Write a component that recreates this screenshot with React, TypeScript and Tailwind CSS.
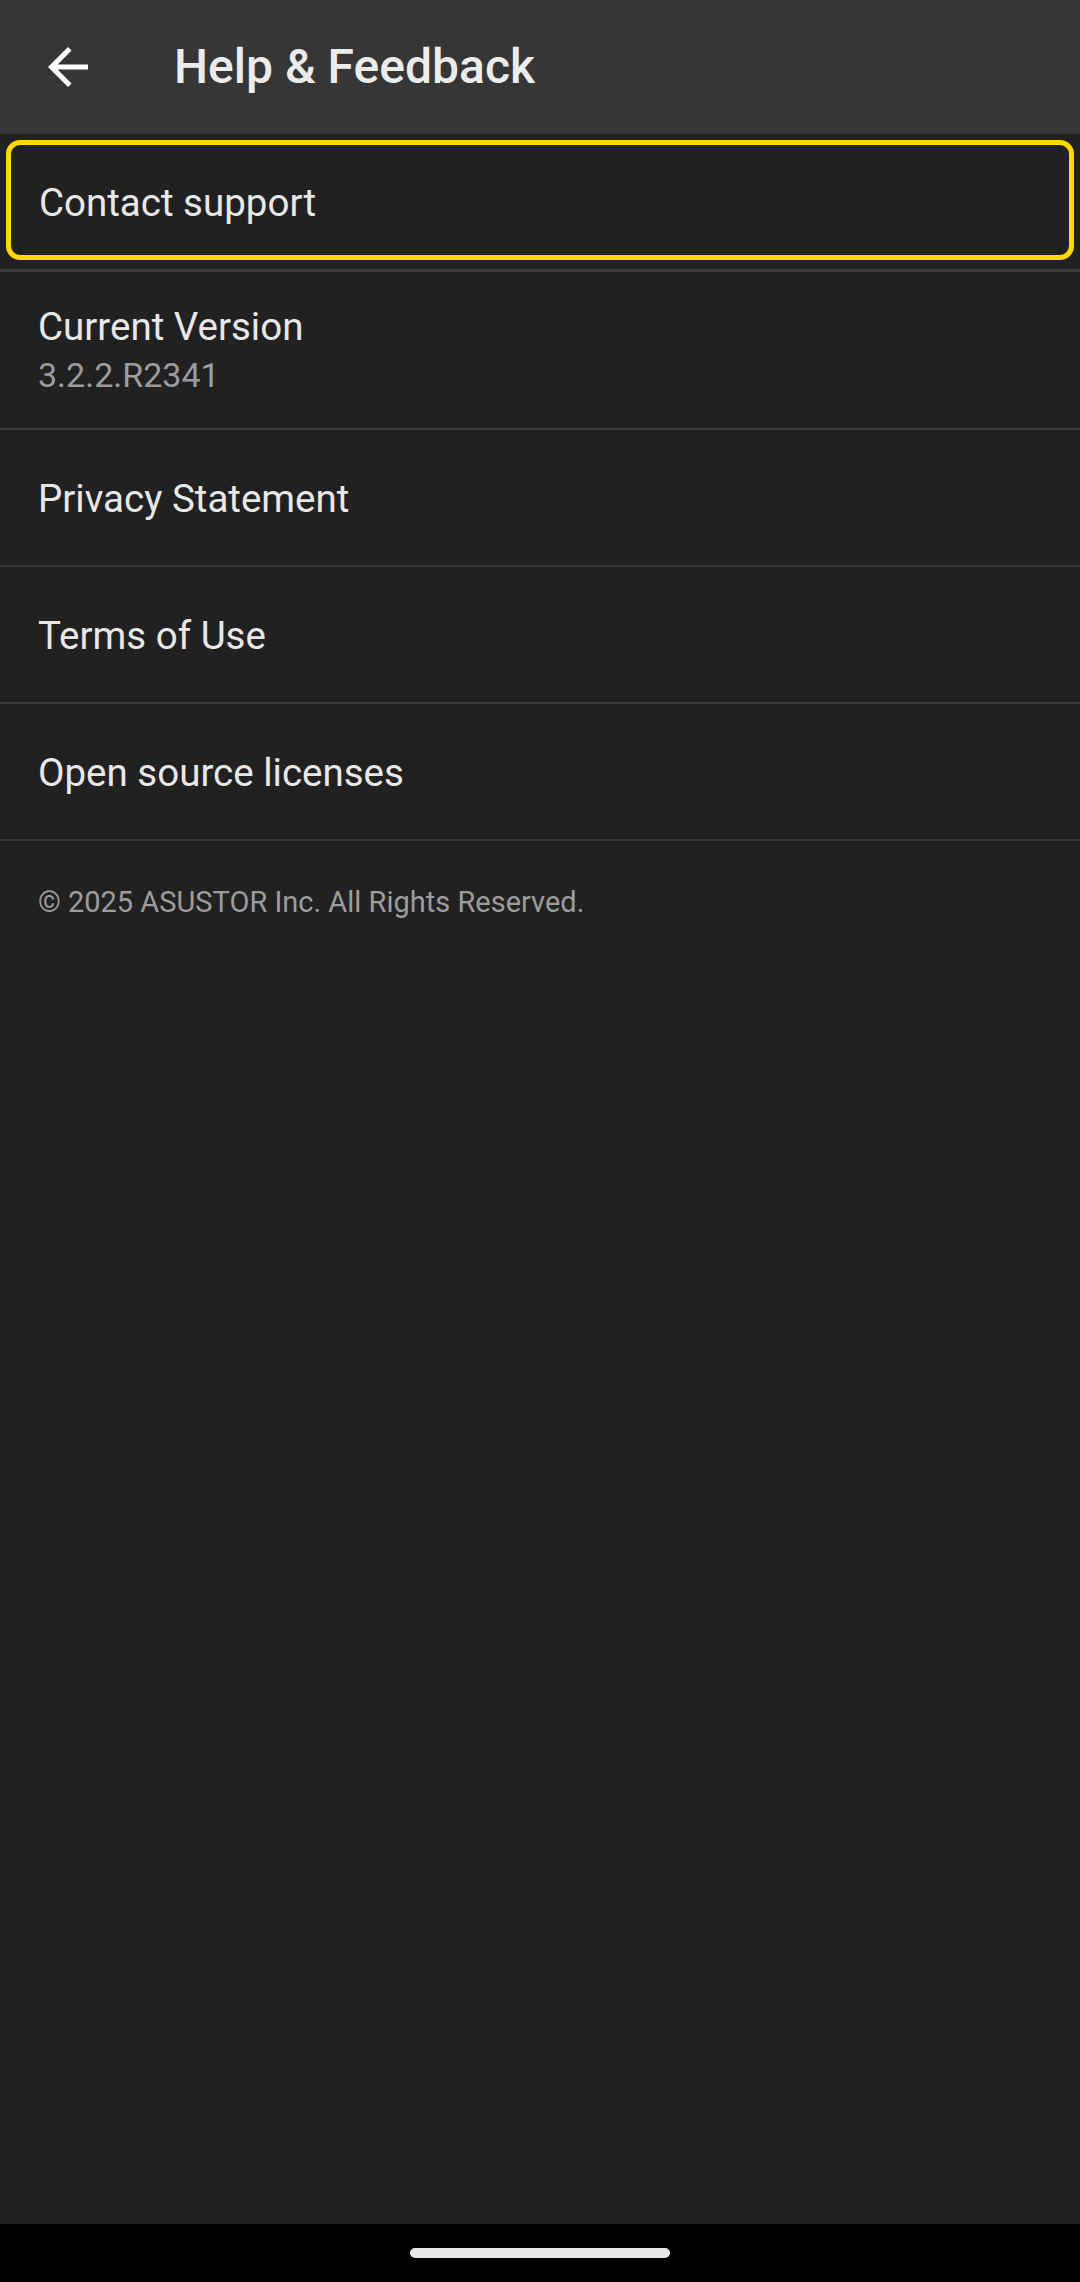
export default function App() {
  const rows = ["Privacy Statement", "Terms of Use", "Open source licenses"];

  return (
    <div className="flex min-h-screen w-full flex-col bg-[#212121] font-['Roboto',sans-serif] text-[#e8e8e8]">
      {/* toolbar */}
      <header className="flex h-[134px] shrink-0 items-center bg-[#363636]">
        <button className="ml-[38px] flex h-[60px] w-[60px] items-center justify-center text-white">
          <svg viewBox="0 0 24 24" className="h-[60px] w-[60px]" fill="currentColor">
            <path d="M20 11H7.83l5.59-5.59L12 4l-8 8 8 8 1.41-1.41L7.83 13H20v-2z" />
          </svg>
        </button>
        <h1 className="ml-[76px] text-[48px] font-medium text-[#ececec]">Help &amp; Feedback</h1>
      </header>

      {/* focused row */}
      <div className="h-[135px] shrink-0 px-[6px] pt-[6px]">
        <div className="flex h-[120px] items-center rounded-[14px] border-[5px] border-[#ffd900] pl-[28px] pt-[6px]">
          <span className="text-[38.5px]">Contact support</span>
        </div>
      </div>
      <div className="h-[3px] shrink-0 bg-[#3a3a3a]" />

      <div className="flex h-[156px] shrink-0 flex-col justify-center pl-[38px] pt-[4px]">
        <span className="text-[38.5px] leading-[46px]">Current Version</span>
        <span className="text-[34px] leading-[50px] text-[#9c9c9c]">3.2.2.R2341</span>
      </div>
      <div className="h-[2px] shrink-0 bg-[#3a3a3a]" />

      {rows.map((label) => (
        <div key={label}>
          <div className="flex h-[135px] items-center pl-[38px] pt-[2px]">
            <span className="text-[38.5px]">{label}</span>
          </div>
          <div className="h-[2px] bg-[#3a3a3a]" />
        </div>
      ))}

      <p className="mt-[40px] pl-[38px] text-[29px] text-[#9c9c9c]">
        © 2025 ASUSTOR Inc. All Rights Reserved.
      </p>

      <div className="flex-1" />

      {/* gesture nav bar */}
      <div className="flex h-[58px] shrink-0 items-center justify-center bg-black">
        <div className="h-[10px] w-[260px] rounded-full bg-[#e8e8e8]" />
      </div>
    </div>
  );
}
